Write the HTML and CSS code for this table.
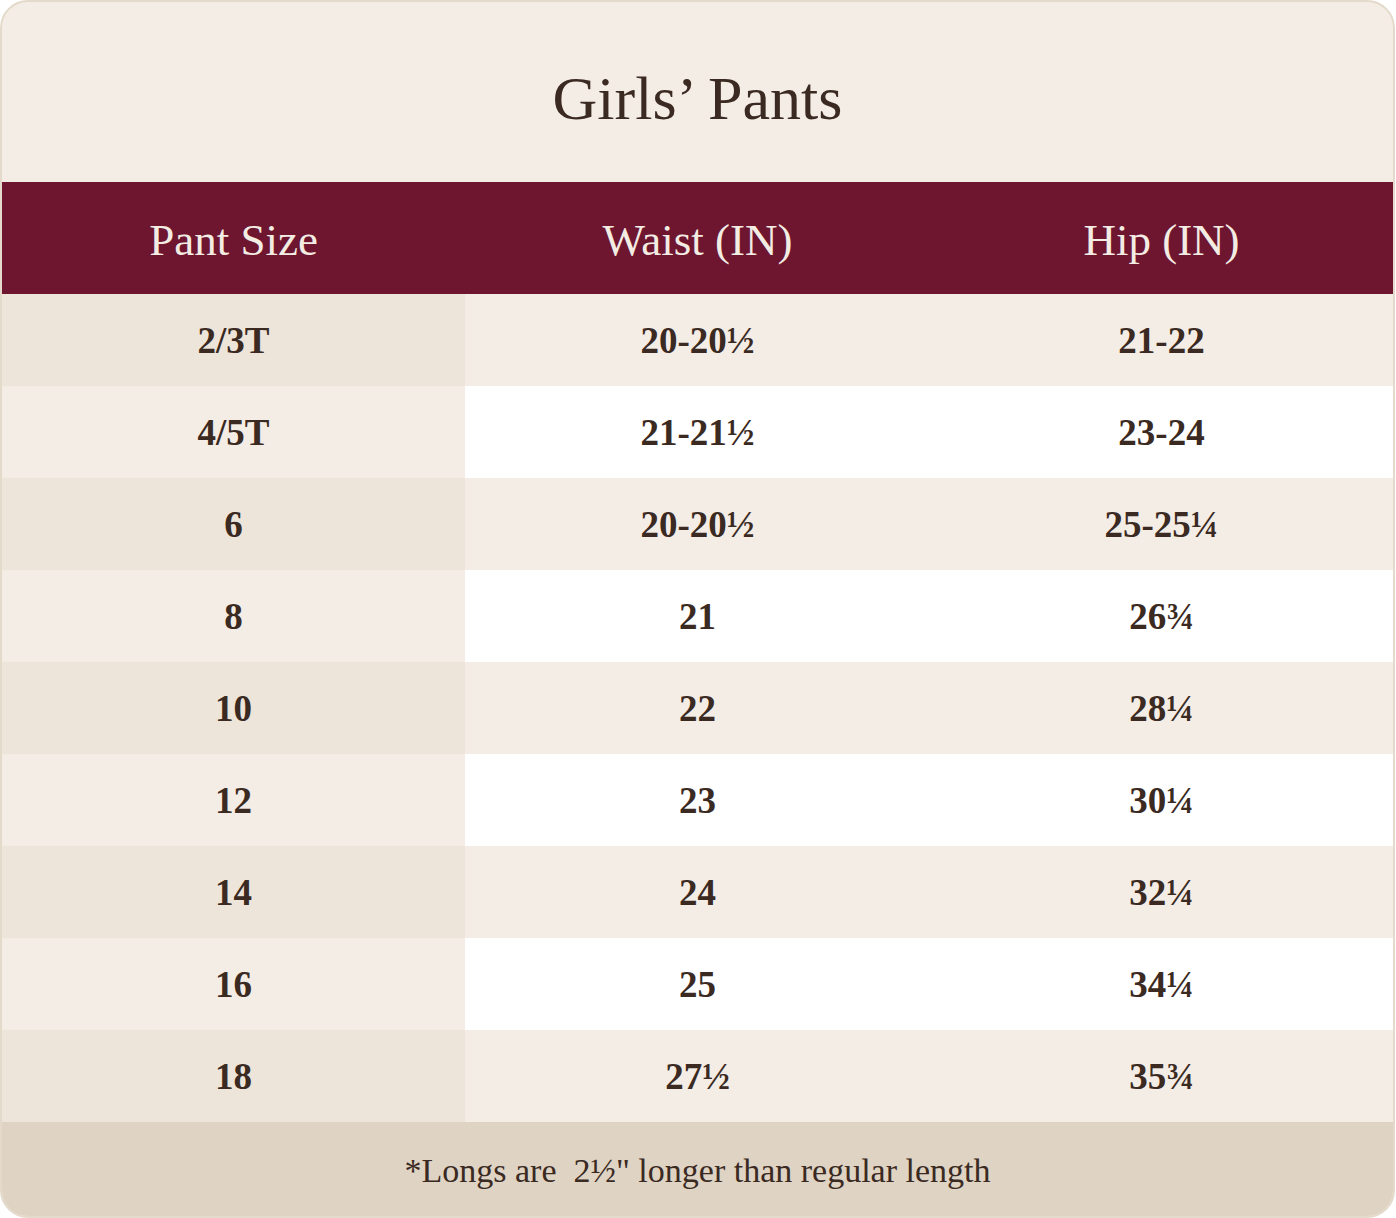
FILE: index.html
```html
<!DOCTYPE html>
<html lang="en">
<head>
<meta charset="utf-8">
<title>Girls' Pants</title>
<link rel="stylesheet" href="styles.css">
</head>
<body>
<div class="card">
  <h1 class="title">Girls’ Pants</h1>
  <div class="chart">
    <div class="row head"><div>Pant Size</div><div>Waist (IN)</div><div>Hip (IN)</div></div>
    <div class="row odd"><div>2/3T</div><div>20-20½</div><div>21-22</div></div>
    <div class="row even"><div>4/5T</div><div>21-21½</div><div>23-24</div></div>
    <div class="row odd"><div>6</div><div>20-20½</div><div>25-25¼</div></div>
    <div class="row even"><div>8</div><div>21</div><div>26¾</div></div>
    <div class="row odd"><div>10</div><div>22</div><div>28¼</div></div>
    <div class="row even"><div>12</div><div>23</div><div>30¼</div></div>
    <div class="row odd"><div>14</div><div>24</div><div>32¼</div></div>
    <div class="row even"><div>16</div><div>25</div><div>34¼</div></div>
    <div class="row odd"><div>18</div><div>27½</div><div>35¾</div></div>
  </div>
  <div class="note">*Longs are &nbsp;2½" longer than regular length</div>
</div>
</body>
</html>
```
FILE: styles.css
```css
html, body {
  margin: 0;
  padding: 0;
  background: #ffffff;
}
.card {
  width: 1395px;
  box-sizing: border-box;
  border: 2px solid #e4dacb;
  border-radius: 28px;
  overflow: hidden;
  background: #f4ede6;
  font-family: "Liberation Serif", "Times New Roman", serif;
  color: #3a2a22;
}
.title {
  margin: 0;
  height: 180px;
  box-sizing: border-box;
  padding-top: 12px;
  display: flex;
  align-items: center;
  justify-content: center;
  font-weight: 400;
  font-size: 62px;
  color: #3a2a22;
}
.chart {
  display: flex;
  flex-direction: column;
}
.row {
  display: grid;
  grid-template-columns: 463px 465px 1fr;
  height: 92px;
}
.row > div {
  display: flex;
  align-items: center;
  justify-content: center;
  font-weight: 700;
  font-size: 37px;
}
.row.head {
  height: 112px;
  background: #6e1530;
}
.row.head > div {
  font-weight: 400;
  font-size: 45px;
  color: #f3ece3;
  padding-top: 4px;
}
.row.odd > div { background: #f4ede6; }
.row.odd > div:first-child { background: #ede5da; }
.row.even > div { background: #ffffff; }
.row.even > div:first-child { background: #f4ede6; }
.note {
  height: 94px;
  box-sizing: border-box;
  padding-top: 3px;
  background: #dfd3c4;
  display: flex;
  align-items: center;
  justify-content: center;
  font-size: 34px;
  color: #3a2a22;
}
```
